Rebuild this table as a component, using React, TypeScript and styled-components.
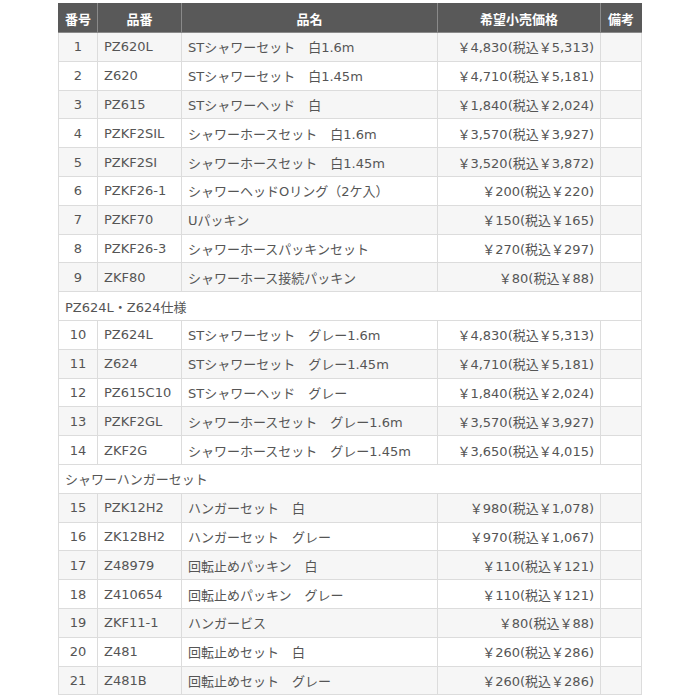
import React from "react";
import styled, { createGlobalStyle } from "styled-components";

const Global = createGlobalStyle`
  html, body { margin: 0; padding: 0; background: #fff; }
  body { font-family: "DejaVu Sans", "Noto Sans CJK JP", sans-serif; }
`;

const Page = styled.div`
  padding: 3px 0 0 58px;
`;

const Table = styled.table`
  border-collapse: collapse;
  table-layout: fixed;
  width: 583px;
  font-size: 13px;
  color: #555555;
`;

const Col = styled.col<{ $w: number }>`
  width: ${(p) => p.$w}px;
`;

const HeadCell = styled.th`
  height: 28px;
  padding: 0;
  background: #595959;
  color: #fff;
  font-family: "Noto Sans CJK JP", sans-serif;
  font-weight: bold;
  font-size: 13px;
  text-align: center;
  border: 1px solid #8a8a8a;
  border-top-color: #595959;
  &:first-child { border-left-color: #595959; }
  &:last-child { border-right-color: #595959; }
`;

const Row = styled.tr<{ $shade: boolean }>`
  background: ${(p) => (p.$shade ? "#f6f6f6" : "#ffffff")};
`;

const Cell = styled.td<{ $align?: "left" | "center" | "right" }>`
  height: 27.8px;
  padding: 0 6px;
  border: 1px solid #dcdcdc;
  text-align: ${(p) => p.$align ?? "left"};
  white-space: nowrap;
  overflow: hidden;
`;

type Item = [string, string, string, string];

const group1: Item[] = [
  ["1", "PZ620L", "STシャワーセット　白1.6m", "￥4,830(税込￥5,313)"],
  ["2", "Z620", "STシャワーセット　白1.45m", "￥4,710(税込￥5,181)"],
  ["3", "PZ615", "STシャワーヘッド　白", "￥1,840(税込￥2,024)"],
  ["4", "PZKF2SIL", "シャワーホースセット　白1.6m", "￥3,570(税込￥3,927)"],
  ["5", "PZKF2SI", "シャワーホースセット　白1.45m", "￥3,520(税込￥3,872)"],
  ["6", "PZKF26-1", "シャワーヘッドOリング（2ケ入）", "￥200(税込￥220)"],
  ["7", "PZKF70", "Uパッキン", "￥150(税込￥165)"],
  ["8", "PZKF26-3", "シャワーホースパッキンセット", "￥270(税込￥297)"],
  ["9", "ZKF80", "シャワーホース接続パッキン", "￥80(税込￥88)"],
];
const group2: Item[] = [
  ["10", "PZ624L", "STシャワーセット　グレー1.6m", "￥4,830(税込￥5,313)"],
  ["11", "Z624", "STシャワーセット　グレー1.45m", "￥4,710(税込￥5,181)"],
  ["12", "PZ615C10", "STシャワーヘッド　グレー", "￥1,840(税込￥2,024)"],
  ["13", "PZKF2GL", "シャワーホースセット　グレー1.6m", "￥3,570(税込￥3,927)"],
  ["14", "ZKF2G", "シャワーホースセット　グレー1.45m", "￥3,650(税込￥4,015)"],
];
const group3: Item[] = [
  ["15", "PZK12H2", "ハンガーセット　白", "￥980(税込￥1,078)"],
  ["16", "ZK12BH2", "ハンガーセット　グレー", "￥970(税込￥1,067)"],
  ["17", "Z48979", "回転止めパッキン　白", "￥110(税込￥121)"],
  ["18", "Z410654", "回転止めパッキン　グレー", "￥110(税込￥121)"],
  ["19", "ZKF11-1", "ハンガービス", "￥80(税込￥88)"],
  ["20", "Z481", "回転止めセット　白", "￥260(税込￥286)"],
  ["21", "Z481B", "回転止めセット　グレー", "￥260(税込￥286)"],
];

const ItemRows = ({ items }: { items: Item[] }) => (
  <>
    {items.map(([no, code, name, price]) => (
      <Row key={no} $shade={Number(no) % 2 === 1}>
        <Cell $align="center">{no}</Cell>
        <Cell>{code}</Cell>
        <Cell>{name}</Cell>
        <Cell $align="right">{price}</Cell>
        <Cell />
      </Row>
    ))}
  </>
);

const Section = ({ label }: { label: string }) => (
  <Row $shade={false}>
    <Cell colSpan={5}>{label}</Cell>
  </Row>
);

export default function App() {
  return (
    <>
      <Global />
      <Page>
        <Table>
          <colgroup>
            <Col $w={39} />
            <Col $w={84} />
            <Col $w={256} />
            <Col $w={163} />
            <Col $w={41} />
          </colgroup>
          <thead>
            <tr>
              <HeadCell>番号</HeadCell>
              <HeadCell>品番</HeadCell>
              <HeadCell>品名</HeadCell>
              <HeadCell>希望小売価格</HeadCell>
              <HeadCell>備考</HeadCell>
            </tr>
          </thead>
          <tbody>
            <ItemRows items={group1} />
            <Section label="PZ624L・Z624仕様" />
            <ItemRows items={group2} />
            <Section label="シャワーハンガーセット" />
            <ItemRows items={group3} />
          </tbody>
        </Table>
      </Page>
    </>
  );
}
